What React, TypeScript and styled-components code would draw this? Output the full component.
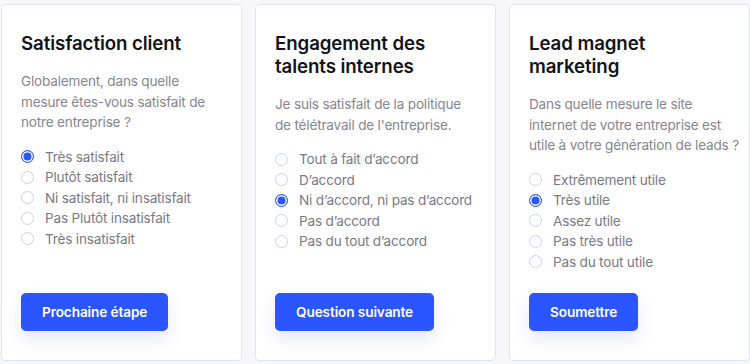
import { FC } from "react";
import styled, { createGlobalStyle } from "styled-components";

type Survey = {
  title: string;
  question: string[];
  options: string[];
  selected: number;
  action: string;
};

// question lines are kept as they break in the mockup
const surveys: Survey[] = [
  {
    title: "Satisfaction client",
    question: ["Globalement, dans quelle", "mesure êtes-vous satisfait de", "notre entreprise ?"],
    options: [
      "Très satisfait",
      "Plutôt satisfait",
      "Ni satisfait, ni insatisfait",
      "Pas Plutôt insatisfait",
      "Très insatisfait",
    ],
    selected: 0,
    action: "Prochaine étape",
  },
  {
    title: "Engagement des talents internes",
    question: ["Je suis satisfait de la politique", "de télétravail de l'entreprise."],
    options: [
      "Tout à fait d’accord",
      "D’accord",
      "Ni d’accord, ni pas d’accord",
      "Pas d’accord",
      "Pas du tout d’accord",
    ],
    selected: 2,
    action: "Question suivante",
  },
  {
    title: "Lead magnet marketing",
    question: [
      "Dans quelle mesure le site",
      "internet de votre entreprise est",
      "utile à votre génération de leads ?",
    ],
    options: [
      "Extrêmement utile",
      "Très utile",
      "Assez utile",
      "Pas très utile",
      "Pas du tout utile",
    ],
    selected: 1,
    action: "Soumettre",
  },
];

const GlobalStyle = createGlobalStyle`
  * { box-sizing: border-box; }
  body {
    margin: 0;
    background: #f7f7f9;
    font-family: Inter, "Noto Sans", sans-serif;
  }
`;

const SurveyCard: FC<{ survey: Survey }> = ({ survey }) => (
  <Card>
    <Title>{survey.title}</Title>
    <Question>
      {survey.question.map((line) => (
        <QuestionLine key={line}>{line}</QuestionLine>
      ))}
    </Question>
    <Options>
      {survey.options.map((label, i) => (
        <Option key={label}>
          <Radio $checked={i === survey.selected} />
          {label}
        </Option>
      ))}
    </Options>
    <Button>{survey.action}</Button>
  </Card>
);

const App: FC = () => (
  <>
    <GlobalStyle />
    <Page>
      {surveys.map((s) => (
        <SurveyCard key={s.title} survey={s} />
      ))}
    </Page>
  </>
);

const Page = styled.div`
  display: grid;
  grid-template-columns: repeat(3, 241px);
  gap: 13px;
  padding: 4px 1px 3px;
  height: 364px;
`;

const Card = styled.div`
  display: flex;
  flex-direction: column;
  background: #ffffff;
  border: 1px solid #dfe3fb;
  border-radius: 4px;
  padding: 27px 19px 29px;
`;

const Title = styled.h2`
  margin: 0 0 16px;
  font-size: 18.7px;
  font-weight: 600;
  line-height: 23px;
  letter-spacing: -0.1px;
  color: #12131a;
`;

const Question = styled.p`
  margin: 0 0 14px;
  font-size: 13.6px;
  line-height: 20.5px;
  letter-spacing: -0.2px;
  color: #85868f;
`;

const QuestionLine = styled.span`
  display: block;
  white-space: nowrap;
`;

const Options = styled.div`
  display: flex;
  flex-direction: column;
`;

const Option = styled.label`
  display: flex;
  align-items: center;
  gap: 11px;
  font-size: 13.6px;
  line-height: 20.5px;
  letter-spacing: -0.2px;
  color: #787a85;
`;

const Radio = styled.span<{ $checked: boolean }>`
  width: 13px;
  height: 13px;
  border-radius: 50%;
  flex-shrink: 0;
  border: 1px solid ${(p) => (p.$checked ? "#2a55ff" : "#c8cff7")};
  background: ${(p) => (p.$checked ? "#2a55ff" : "#fff")};
  box-shadow: ${(p) => (p.$checked ? "inset 0 0 0 1.5px #fff" : "none")};
`;

const Button = styled.button`
  margin-top: auto;
  align-self: flex-start;
  height: 38px;
  padding: 0 21px;
  border: none;
  border-radius: 5px;
  background: #2a55ff;
  color: #fff;
  font-family: inherit;
  font-size: 13.6px;
  font-weight: 600;
  letter-spacing: -0.1px;
  box-shadow: 0 8px 18px rgba(40, 60, 140, 0.12);
  cursor: pointer;
`;

export default App;
